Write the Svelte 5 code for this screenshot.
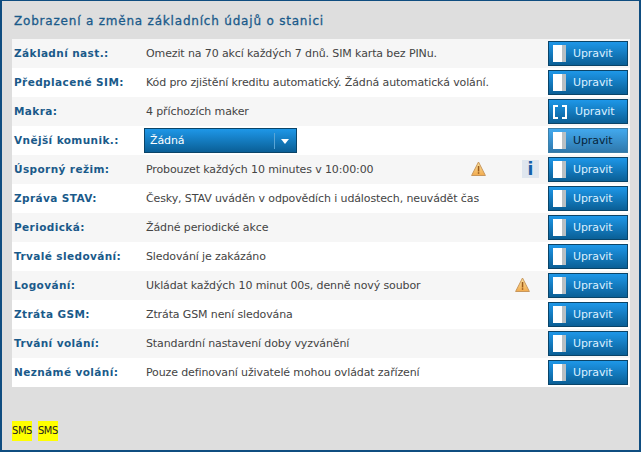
<script>
    const rows = [
        { label: "Základní nast.:", text: "Omezit na 70 akcí každých 7 dnů. SIM karta bez PINu." },
        { label: "Předplacené SIM:", text: "Kód pro zjištění kreditu automatický. Žádná automatická volání." },
        { label: "Makra:", text: "4 příchozích maker", macro: true },
        { label: "Vnější komunik.:", select: "Žádná", hover: true },
        { label: "Úsporný režim:", text: "Probouzet každých 10 minutes v 10:00:00", warn: 325, info: true },
        { label: "Zpráva STAV:", text: "Česky, STAV uváděn v odpovědích i událostech, neuvádět čas" },
        { label: "Periodická:", text: "Žádné periodické akce" },
        { label: "Trvalé sledování:", text: "Sledování je zakázáno" },
        { label: "Logování:", text: "Ukládat každých 10 minut 00s, denně nový soubor", warn: 369 },
        { label: "Ztráta GSM:", text: "Ztráta GSM není sledována" },
        { label: "Trvání volání:", text: "Standardní nastavení doby vyzvánění" },
        { label: "Neznámé volání:", text: "Pouze definovaní uživatelé mohou ovládat zařízení" }
    ];
</script>

<main>
    <h1>Zobrazení a změna základních údajů o stanici</h1>

    <div class="table">
        {#each rows as row, i}
            <div class="row" class:odd={i % 2 === 0}>
                <div class="label">{row.label}</div>
                <div class="value">
                    {#if row.select}
                        <div class="select">
                            <span class="select-text">{row.select}</span>
                            <span class="select-arrow"></span>
                        </div>
                    {:else}
                        <span>{row.text}</span>
                    {/if}
                    {#if row.warn}
                        <svg class="warn" style="left: {row.warn}px" width="15" height="16" viewBox="0 0 15 16">
                            <defs>
                                <linearGradient id="warn-fill" x1="0" y1="0" x2="0" y2="1">
                                    <stop offset="0" stop-color="#fbe3a0" />
                                    <stop offset="1" stop-color="#f2ab4e" />
                                </linearGradient>
                            </defs>
                            <path d="M7.5 1 L14.4 14.5 H0.6 Z" fill="url(#warn-fill)" stroke="#c8975c" stroke-width="1" stroke-linejoin="round" />
                            <rect x="6.8" y="5" width="1.5" height="5.5" fill="#9a5b1e" />
                            <rect x="6.8" y="11.2" width="1.5" height="1.6" fill="#9a5b1e" />
                        </svg>
                    {/if}
                    {#if row.info}
                        <span class="info">i</span>
                    {/if}
                </div>
                <button class="edit" class:hover={row.hover}>
                    {#if row.macro}
                        <span class="brackets"></span>
                    {:else}
                        <span class="page"></span>
                    {/if}
                    <span>Upravit</span>
                </button>
            </div>
        {/each}
    </div>

    <div class="sms">
        <span>SMS</span>
        <span>SMS</span>
    </div>
</main>

<style>
    :global(body) {
        margin: 0;
        background: #dedede;
    }

    main {
        box-sizing: border-box;
        width: 641px;
        height: 452px;
        padding: 0 10px 0 12px;
        background: #dedede;
        border: solid #0f4d80;
        border-width: 1px 2px 2px 2px;
        font-family: "DejaVu Sans", sans-serif;
        font-size: 11px;
        overflow: hidden;
        position: relative;
    }

    h1 {
        margin: 0;
        padding: 12px 0 0;
        height: 26px;
        box-sizing: content-box;
        font-size: 12px;
        line-height: 16px;
        font-weight: normal;
        letter-spacing: 0.8px;
        color: #1a5a8a;
        -webkit-text-stroke: 0.3px #1a5a8a;
    }

    .table {
        margin-left: -2px;
        width: 618px;
    }

    .row {
        display: flex;
        align-items: center;
        height: 29px;
        background: #fff;
    }

    .row.odd {
        background: #f6f6f6;
    }

    .label {
        width: 132px;
        padding: 0 0 2px 2px;
        font-size: 10.5px;
        font-weight: bold;
        letter-spacing: 0.4px;
        color: #1a5a8a;
    }

    .value {
        flex: 1;
        position: relative;
        display: flex;
        align-items: center;
        height: 100%;
        letter-spacing: -0.12px;
        color: #444;
    }

    .select {
        box-sizing: border-box;
        display: flex;
        align-items: center;
        justify-content: space-between;
        width: 153px;
        height: 25px;
        margin-left: -2px;
        padding-left: 5px;
        border: 1px solid #0a4468;
        background: linear-gradient(#1e97e8, #0a5f96);
        color: #fff;
    }

    .select-arrow {
        position: relative;
        width: 20px;
        height: 16px;
        margin-right: 1px;
        border-left: 1px solid #5aa5d5;
    }

    .select-arrow::after {
        content: "";
        position: absolute;
        left: 6px;
        top: 6px;
        border: 4px solid transparent;
        border-top: 5px solid #fff;
        border-bottom: 0;
    }

    .warn {
        position: absolute;
        top: 6px;
    }

    .info {
        position: absolute;
        left: 376px;
        top: 5px;
        width: 17px;
        height: 18px;
        background: #dfe6ee;
        color: #1560a8;
        font-size: 17px;
        font-weight: bold;
        letter-spacing: 0;
        line-height: 18px;
        text-align: center;
    }

    .edit {
        box-sizing: border-box;
        display: flex;
        align-items: center;
        gap: 7px;
        width: 80px;
        height: 25px;
        margin-right: 2px;
        padding: 0 0 0 4px;
        border: 1px solid #0a4468;
        background: linear-gradient(#1e97e8, #0a5f96);
        color: #dcf0ff;
        font: inherit;
        letter-spacing: -0.1px;
    }

    .edit.hover {
        background: linear-gradient(#42a9ee, #2f78ac);
        border-color: #3d7fa8;
        color: #06243a;
    }

    .page {
        display: block;
        width: 13px;
        height: 17px;
        background: linear-gradient(90deg, #fff 0 9px, #b9c0c4 9px);
    }

    .brackets {
        position: relative;
        display: block;
        width: 14px;
        height: 14px;
        margin-right: 1px;
        border-left: 2px solid #fff;
        border-right: 2px solid #fff;
        box-sizing: border-box;
    }

    .brackets::before {
        content: "";
        position: absolute;
        left: 0;
        right: 0;
        top: 0;
        bottom: 0;
        background:
            linear-gradient(#fff, #fff) left top / 3px 2px no-repeat,
            linear-gradient(#fff, #fff) right top / 3px 2px no-repeat,
            linear-gradient(#fff, #fff) left bottom / 3px 2px no-repeat,
            linear-gradient(#fff, #fff) right bottom / 3px 2px no-repeat;
    }

    .sms {
        display: flex;
        gap: 6px;
        margin-top: 34px;
        margin-left: -2px;
        font-family: "DejaVu Sans Condensed", "DejaVu Sans", sans-serif;
        font-size: 11px;
        letter-spacing: -0.4px;
        color: #222;
    }

    .sms span {
        background: #ffff00;
        line-height: 20px;
    }
</style>
